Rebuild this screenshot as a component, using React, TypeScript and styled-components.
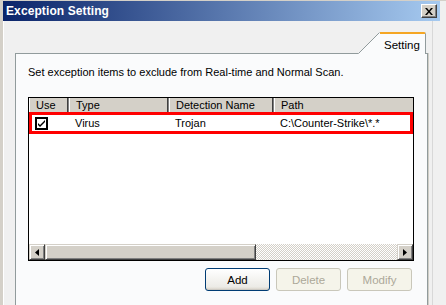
import React from 'react'
import styled, { createGlobalStyle } from 'styled-components'

const GlobalStyle = createGlobalStyle`
    html, body {
        margin: 0;
        padding: 0;
        overflow: hidden;
    }
    body {
        font-family: "Liberation Sans", Arial, sans-serif;
        font-size: 11px;
        color: #000;
    }
`

const Window = styled.div`
    width: 446px;
    height: 305px;
    box-sizing: border-box;
    background: #f0f0f0;
    border-top: 1px solid #d4d0c8;
    border-left: 3px solid #d4d0c8;
    box-shadow: inset 1px 0 #ffffff;
    display: flex;
    flex-direction: column;
    overflow: hidden;
`
const TitleBar = styled.div`
    height: 20px;
    margin-right: 6px;
    padding: 0 3px 0 3px;
    display: flex;
    align-items: center;
    justify-content: space-between;
    background: linear-gradient(to right, #0a246a, #a6caf0);
    color: #fff;
    font-weight: bold;
    font-size: 12px;
    letter-spacing: 0.1px;
`
const CloseButton = styled.div`
    width: 16px;
    height: 14px;
    box-sizing: border-box;
    background: #d4d0c8;
    border: 1px solid;
    border-color: #fff #404040 #404040 #fff;
    box-shadow: inset -1px -1px #808080;
    display: flex;
    align-items: center;
    justify-content: center;
`
const Body = styled.div`
    flex: 1;
    display: flex;
    padding: 10px 0 0 12px;
    border-right: 1px solid #d8d8d8;
    margin-right: 13px;
`
const TabArea = styled.div`
    width: 413px;
    display: flex;
    flex-direction: column;
`
const TabRow = styled.div`
    height: 22px;
    display: flex;
    justify-content: flex-end;
    align-items: flex-end;
    position: relative;
    z-index: 1;
`
const TabLabel = styled.div`
    width: 46px;
    height: 22px;
    box-sizing: border-box;
    margin-right: 2px;
    margin-bottom: -1px;
    padding: 5px 0 0 4px;
    background: #fafbfc;
    border-top: 2px solid #f5a623;
    border-right: 1px solid #919b9c;
    border-top-right-radius: 2px;
    font-size: 11.5px;
    white-space: nowrap;
`
const Panel = styled.div`
    flex: 1;
    background: #fafbfc;
    border: 1px solid #919b9c;
    border-bottom: none;
    box-shadow: 1px 0 #d0cec6;
    padding: 11px 0 0 12px;
`
const Description = styled.div`
    height: 14px;
    line-height: 14px;
    font-size: 11px;
`
const List = styled.div`
    margin-top: 18px;
    width: 386px;
    height: 164px;
    box-sizing: border-box;
    border: 1px solid #000;
    background: #fff;
    display: flex;
    flex-direction: column;
`
const Header = styled.div`
    height: 14px;
    display: flex;
    background: #d4d0c8;
`
const HeaderCell = styled.div<{ $w?: number }>`
    ${p => (p.$w ? `width: ${p.$w}px;` : 'flex: 1;')}
    box-sizing: border-box;
    padding-left: 6px;
    line-height: 14px;
    font-size: 11px;
    border-left: 1px solid #fff;
    border-right: 1px solid #808080;
    box-shadow: inset -1px 0 #404040;
    &:last-child {
        border-right: none;
        box-shadow: none;
    }
`
const Row = styled.div`
    height: 22px;
    box-sizing: border-box;
    border: 3px solid #ff0000;
    display: flex;
    align-items: center;
`
const Cell = styled.div<{ $w?: number; $pad?: number }>`
    ${p => (p.$w ? `width: ${p.$w}px;` : 'flex: 1;')}
    box-sizing: border-box;
    padding-left: ${p => p.$pad ?? 5}px;
    font-size: 11px;
    white-space: nowrap;
`
const CheckBox = styled.div`
    width: 13px;
    height: 13px;
    box-sizing: border-box;
    border: 2px solid #000;
    background: #fff;
    display: flex;
    align-items: center;
    justify-content: center;
`
const ListSpace = styled.div`
    flex: 1;
`
const ScrollBar = styled.div`
    height: 16px;
    display: flex;
`
const Bevel = styled.div<{ $w?: number }>`
    ${p => (p.$w ? `width: ${p.$w}px;` : 'flex: 1;')}
    height: 16px;
    box-sizing: border-box;
    background: #d4d0c8;
    border: 1px solid;
    border-color: #d4d0c8 #404040 #404040 #d4d0c8;
    box-shadow: inset 1px 1px #fff, inset -1px -1px #808080;
    display: flex;
    align-items: center;
    justify-content: center;
`
const Track = styled.div`
    flex: 1;
    background-color: #fff;
    background-image: conic-gradient(#d4d0c8 25%, #fff 0 50%, #d4d0c8 0 75%, #fff 0);
    background-size: 2px 2px;
`
const ButtonRow = styled.div`
    width: 384px;
    margin-top: 7px;
    display: flex;
    justify-content: flex-end;
    gap: 6px;
`
const Button = styled.div<{ $disabled?: boolean }>`
    width: 65px;
    height: 23px;
    box-sizing: border-box;
    border-radius: 3px;
    border: 1px solid ${p => (p.$disabled ? '#c9c7ba' : '#003c74')};
    background: ${p => (p.$disabled ? '#f5f4ea' : 'linear-gradient(#ffffff, #ecebe6 85%, #d6d0c5)')};
    color: ${p => (p.$disabled ? '#aca899' : '#000')};
    box-shadow: ${p => (p.$disabled ? 'none' : 'inset 0 -1px #cdcac3')};
    display: flex;
    align-items: center;
    justify-content: center;
    font-size: 11.5px;
`

const columns = [40, 100, 105]

const App = () => {
    return (
        <Window>
            <GlobalStyle />
            <TitleBar>
                <span>Exception Setting</span>
                <CloseButton>
                    <svg width="8" height="7" viewBox="0 0 8 7">
                        <path d="M0 0h2l2 2.5L6 0h2L5 3.5 8 7H6L4 4.5 2 7H0l3-3.5z" fill="#000" />
                    </svg>
                </CloseButton>
            </TitleBar>
            <Body>
                <TabArea>
                    <TabRow>
                        <svg width="22" height="22" viewBox="0 0 22 22" style={{ marginBottom: -1 }}>
                            <path d="M0 22L22 0V22Z" fill="#fafbfc" />
                            <path d="M0.5 21.5L21.5 0.5" stroke="#919b9c" strokeWidth="1" />
                        </svg>
                        <TabLabel>Setting</TabLabel>
                    </TabRow>
                    <Panel>
                        <Description>Set exception items to exclude from Real-time and Normal Scan.</Description>
                        <List>
                            <Header>
                                <HeaderCell $w={columns[0]}>Use</HeaderCell>
                                <HeaderCell $w={columns[1]}>Type</HeaderCell>
                                <HeaderCell $w={columns[2]}>Detection Name</HeaderCell>
                                <HeaderCell>Path</HeaderCell>
                            </Header>
                            <Row>
                                <Cell $w={columns[0] - 3} $pad={3}>
                                    <CheckBox>
                                        <svg width="9" height="9" viewBox="0 0 9 9">
                                            <path d="M1 4l2 2 5-5v2L3 8 1 6z" fill="#000" />
                                        </svg>
                                    </CheckBox>
                                </Cell>
                                <Cell $w={columns[1]} $pad={6}>Virus</Cell>
                                <Cell $w={columns[2]} $pad={6}>Trojan</Cell>
                                <Cell $pad={6}>C:\Counter-Strike\*.*</Cell>
                            </Row>
                            <ListSpace />
                            <ScrollBar>
                                <Bevel $w={16}>
                                    <svg width="4" height="7" viewBox="0 0 4 7">
                                        <path d="M4 0v7L0 3.5z" fill="#000" />
                                    </svg>
                                </Bevel>
                                <Bevel $w={211} />
                                <Track />
                                <Bevel $w={16}>
                                    <svg width="4" height="7" viewBox="0 0 4 7">
                                        <path d="M0 0v7l4-3.5z" fill="#000" />
                                    </svg>
                                </Bevel>
                            </ScrollBar>
                        </List>
                        <ButtonRow>
                            <Button>Add</Button>
                            <Button $disabled>Delete</Button>
                            <Button $disabled>Modify</Button>
                        </ButtonRow>
                    </Panel>
                </TabArea>
            </Body>
        </Window>
    )
}
export default App
